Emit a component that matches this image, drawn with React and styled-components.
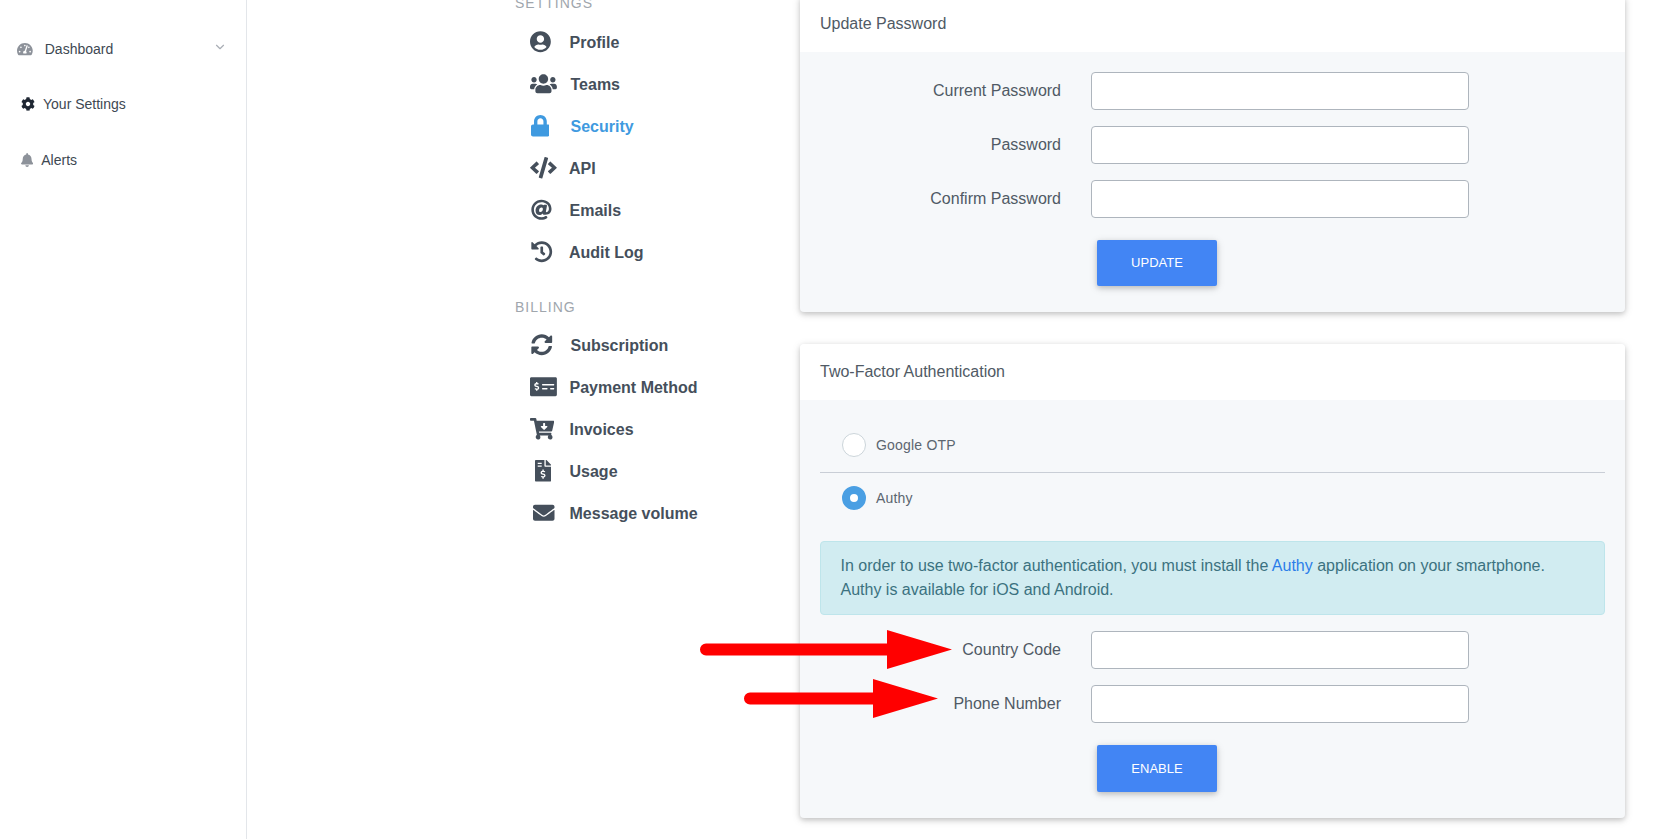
import React from 'react';
import styled, { createGlobalStyle } from 'styled-components';
import {
  FaTachometerAlt, FaCog, FaBell, FaUserCircle, FaUsers, FaLock, FaCode, FaAt, FaHistory,
  FaSyncAlt, FaMoneyCheckAlt, FaCartArrowDown, FaFileInvoiceDollar, FaEnvelope,
} from 'react-icons/fa';
import { FiChevronDown } from 'react-icons/fi';

const GlobalStyle = createGlobalStyle`
  html, body { margin: 0; padding: 0; background: #fff; }
  body { font-family: "Liberation Sans", Arial, sans-serif; color: #3d4852; }
  * { box-sizing: border-box; }
`;

const Page = styled.div`
  position: relative;
  display: flex;
  width: 1662px;
  height: 839px;
  overflow: hidden;
`;

const Sidebar = styled.aside`
  flex: 0 0 247px;
  border-right: 1px solid #e3e6ea;
  padding-top: 21px;
`;

const SideItem = styled.div`
  display: flex;
  align-items: center;
  height: ${(p) => p.$height || 56}px;
  padding-left: ${(p) => p.$left}px;
  font-size: 14px;
  color: #3d4852;
  svg {
    flex: none;
    width: ${(p) => p.$iconWidth}px;
    height: 14px;
    color: ${(p) => p.$iconColor || '#8d929a'};
  }
`;

const SideLabel = styled.span`
  margin-left: ${(p) => p.$gap}px;
`;

const Chevron = styled(FiChevronDown)`
  margin-left: 100px;
  margin-top: -4px;
  && { width: 14px; color: #a9aeb5; }
`;

const Content = styled.main`
  flex: 1;
  display: flex;
  align-items: flex-start;
  padding-left: 268px;
`;

const Nav = styled.nav`
  flex: 0 0 285px;
  margin-top: -6px;
`;

const NavHeading = styled.div`
  height: 18px;
  line-height: 18px;
  font-size: 14px;
  letter-spacing: 1px;
  color: #a0a6ad;
  margin-top: ${(p) => p.$top || 0}px;
  margin-bottom: ${(p) => p.$bottom}px;
`;

const NavItem = styled.div`
  display: flex;
  align-items: center;
  height: 42px;
  padding-left: 15px;
  font-size: 16px;
  font-weight: 700;
  color: ${(p) => (p.$active ? '#3f9ae0' : '#454f5b')};
`;

const NavIcon = styled.span`
  display: flex;
  align-items: center;
  flex: none;
  width: ${(p) => p.$width || 39.5}px;
  padding-left: ${(p) => p.$indent || 0}px;
  svg {
    width: ${(p) => 21.5 * p.$ratio}px;
    height: 21.5px;
    margin-top: -2px;
  }
`;

const Cards = styled.div`
  flex: 0 0 825px;
  margin-top: -4px;
  display: flex;
  flex-direction: column;
  gap: 32px;
`;

const Card = styled.section`
  border-radius: 4px;
  background: #f6f8fa;
  box-shadow: 0 2px 5px rgba(0, 0, 0, 0.16), 0 2px 10px rgba(0, 0, 0, 0.12);
  overflow: hidden;
`;

const CardHeader = styled.header`
  height: 56px;
  line-height: 56px;
  padding-left: 20px;
  background: #fff;
  font-size: 16px;
  color: #505a65;
`;

const CardBody = styled.div`
  padding: ${(p) => p.$top}px 20px ${(p) => p.$bottom}px;
`;

const FormRow = styled.div`
  display: grid;
  grid-template-columns: 241px 378px;
  column-gap: 30px;
  align-items: center;
  margin-bottom: 16px;
  label { text-align: right; font-size: 16px; color: #505a65; }
`;

const TextInput = styled.input`
  height: 38px;
  width: 100%;
  background: #fff;
  border: 1px solid #aeb5bd;
  border-radius: 4px;
`;

const Button = styled.button`
  display: block;
  width: 120px;
  height: ${(p) => p.$height}px;
  margin: 22px 0 0 277px;
  padding: 0 0 ${(p) => p.$lift}px;
  border: 0;
  border-radius: 2px;
  background: #4285f4;
  color: #fff;
  font-family: inherit;
  font-size: 13px;
  box-shadow: 0 2px 5px rgba(0, 0, 0, 0.16), 0 2px 10px rgba(0, 0, 0, 0.12);
`;

const RadioRow = styled.div`
  display: flex;
  align-items: center;
  gap: 10px;
  height: ${(p) => (p.$divider ? 54 : 50)}px;
  padding-left: 22px;
  padding-bottom: ${(p) => (p.$divider ? 1 : 0)}px;
  font-size: 14px;
  letter-spacing: 0.2px;
  color: #5c6670;
  border-bottom: ${(p) => (p.$divider ? '1px solid #c9ced6' : '0')};
`;

const Radio = styled.span`
  flex: none;
  width: 24px;
  height: 24px;
  border-radius: 50%;
  background: #fff;
  border: ${(p) => (p.$checked ? '8px solid #4a9fe3' : '1px solid #ccd5da')};
`;

const Alert = styled.div`
  margin: 18px 0 16px;
  padding: 12px 19.5px;
  height: 74px;
  border: 1px solid #bee5eb;
  border-radius: 4px;
  background: #d1ecf1;
  font-size: 16px;
  line-height: 24px;
  color: #3b7280;
  a { color: #2b7de9; text-decoration: none; }
`;

const Arrow = styled.svg`
  position: absolute;
  left: 0;
  top: 0;
  pointer-events: none;
`;

const passwordFields = ['Current Password', 'Password', 'Confirm Password'];
const phoneFields = ['Country Code', 'Phone Number'];

// ratio = viewBox width / height of each icon
const settingsNav = [
  { label: 'Profile', icon: FaUserCircle, ratio: 0.969 },
  { label: 'Teams', icon: FaUsers, ratio: 1.25, width: 40.5 },
  { label: 'Security', icon: FaLock, ratio: 0.875, indent: 0.5, width: 40.5, active: true },
  { label: 'API', icon: FaCode, ratio: 1.25, width: 39 },
  { label: 'Emails', icon: FaAt, ratio: 0.969, indent: 1 },
  { label: 'Audit Log', icon: FaHistory, ratio: 1, indent: 1, width: 39 },
];

const billingNav = [
  { label: 'Subscription', icon: FaSyncAlt, ratio: 1, indent: 1, width: 40.5 },
  { label: 'Payment Method', icon: FaMoneyCheckAlt, ratio: 1.25 },
  { label: 'Invoices', icon: FaCartArrowDown, ratio: 1.125 },
  { label: 'Usage', icon: FaFileInvoiceDollar, ratio: 0.75, indent: 5 },
  { label: 'Message volume', icon: FaEnvelope, ratio: 1, indent: 3 },
];

const NavList = ({ items }) =>
  items.map(({ label, icon: Icon, ratio, width, indent, active }) => (
    <NavItem key={label} $active={active}>
      <NavIcon $ratio={ratio} $width={width} $indent={indent}>
        <Icon />
      </NavIcon>
      {label}
    </NavItem>
  ));

const Fields = ({ labels }) =>
  labels.map((label) => (
    <FormRow key={label}>
      <label>{label}</label>
      <TextInput type="text" />
    </FormRow>
  ));

export default function App() {
  return (
    <Page>
      <GlobalStyle />
      <Sidebar>
        <SideItem $left={17} $height={55} $iconWidth={15.75}>
          <FaTachometerAlt />
          <SideLabel $gap={12}>Dashboard</SideLabel>
          <Chevron />
        </SideItem>
        <SideItem $left={21} $iconWidth={14} $iconColor="#1f2733">
          <FaCog />
          <SideLabel $gap={8}>Your Settings</SideLabel>
        </SideItem>
        <SideItem $left={21} $iconWidth={12.25}>
          <FaBell />
          <SideLabel $gap={8}>Alerts</SideLabel>
        </SideItem>
      </Sidebar>
      <Content>
        <Nav>
          <NavHeading $bottom={10}>SETTINGS</NavHeading>
          <NavList items={settingsNav} />
          <NavHeading $top={24} $bottom={9}>BILLING</NavHeading>
          <NavList items={billingNav} />
        </Nav>
        <Cards>
          <Card>
            <CardHeader>Update Password</CardHeader>
            <CardBody $top={20} $bottom={26}>
              <Fields labels={passwordFields} />
              <Button $height={46} $lift={2}>UPDATE</Button>
            </CardBody>
          </Card>
          <Card>
            <CardHeader>Two-Factor Authentication</CardHeader>
            <CardBody $top={19} $bottom={26}>
              <RadioRow $divider>
                <Radio />
                Google OTP
              </RadioRow>
              <RadioRow>
                <Radio $checked />
                Authy
              </RadioRow>
              <Alert>
                In order to use two-factor authentication, you must install the <a href="#authy">Authy</a> application on your smartphone.
                <br />
                Authy is available for iOS and Android.
              </Alert>
              <Fields labels={phoneFields} />
              <Button $height={47} $lift={1}>ENABLE</Button>
            </CardBody>
          </Card>
        </Cards>
      </Content>
      <Arrow width="1662" height="839" viewBox="0 0 1662 839">
        <path d="M706 643.5H887V630L952 649.5L887 669V655.5H706A6 6 0 0 1 706 643.5Z" fill="#ff0000" />
        <path d="M750 692.5H873V679L938 698.5L873 718V704.5H750A6 6 0 0 1 750 692.5Z" fill="#ff0000" />
      </Arrow>
    </Page>
  );
}
